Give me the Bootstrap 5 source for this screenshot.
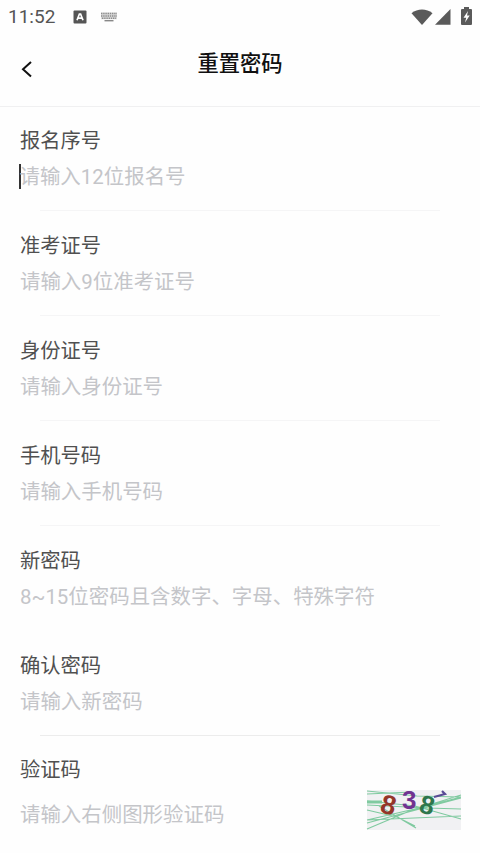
<!DOCTYPE html>
<html lang="zh-CN">
<head>
<meta charset="utf-8">
<meta name="viewport" content="width=device-width, initial-scale=1">
<title>重置密码</title>
<link href="https://cdn.jsdelivr.net/npm/bootstrap@5.3.0/dist/css/bootstrap.min.css" rel="stylesheet">
<style>
body{font-family:Roboto,"Noto Sans CJK SC",sans-serif;background:#fefefe;height:853px;overflow:hidden}
.status-bar{height:34px;padding:0 7px 0 8px;color:#555}
.clock{font-size:19px;line-height:34px;width:65px}
.title-bar{height:72.5px;border-bottom:1.5px solid #f0f0f1}
.side{width:54px}
.page-title{font-size:21.3px;line-height:32px;font-weight:500;color:#101010;margin-top:14px}
.field{height:104.85px;padding:19.8px 20px 0}
.field-label{font-size:20.3px;line-height:30px;color:#505050}
.hint{font-size:20.45px;line-height:30px;color:#c4c5c9;margin-top:6px}
.caret{width:1.5px;height:25px;background:#333;margin:-1px -1px 0 -1px}
.rule{height:1px;background:#f5f5f6;margin:18px 20px 0}
.rule-dark{background:#ececec}
.captcha-row{padding:6px 19px 0 0}
.captcha{margin-top:-1px}
</style>
<script src="https://cdn.jsdelivr.net/npm/bootstrap@5.3.0/dist/js/bootstrap.bundle.min.js"></script>
</head>
<body>
<div class="status-bar d-flex align-items-center">
  <span class="clock">11:52</span>
  <svg width="14" height="14" viewBox="0 0 14 14"><rect x=".5" y=".5" width="13" height="13" rx="1" fill="#555"/><path d="M4 10.3 6.4 4h1.2L10 10.3M5 8.2h4" fill="none" stroke="#fff" stroke-width="1.7"/></svg>
  <svg width="16" height="10" viewBox="0 0 16 10" style="margin-left:14px"><path d="M0 1.5h16M0 4h16M1 6.3h14" stroke="#888" stroke-width="1.5" stroke-dasharray="1.4 .8"/><path d="M0 .5h16v6.7H0z" fill="#999" opacity=".35"/><path d="M3.5 8.7h9" stroke="#888" stroke-width="1.4"/></svg>
  <svg class="ms-auto" width="22" height="17" viewBox="0 0 22 17"><path d="M.5 4.200C6.500-.7 15.500-.7 21.500 4.200L11 16z" fill="#5a5a5a"/></svg>
  <svg width="16" height="16" viewBox="0 0 16 16" style="margin-left:2px"><path d="M15.500 0v15.800H0z" fill="#5a5a5a"/></svg>
  <svg width="11" height="18" viewBox="0 0 11 18" style="margin:-2px 1px 0 10px"><path d="M3 0h5v2h2q1 0 1 1v14q0 1-1 1H1q-1 0-1-1V3q0-1 1-1h2z" fill="#5a5a5a"/><path d="M7 4 2.500 10.700h2.700L4 15.500 8.700 8.500H6z" fill="#fff"/></svg>
</div>
<header class="title-bar d-flex">
  <a href="#" class="side d-flex pt-4 ps-3" aria-label="返回"><svg width="20" height="22" viewBox="0 0 20 22"><path d="M15 4 7 11.300 15 18.600" fill="none" stroke="#111" stroke-width="2"/></svg></a>
  <h1 class="page-title flex-fill text-center mb-0">重置密码</h1>
  <div class="side"></div>
</header>
<main>
  <div class="field"><div class="field-label">报名序号</div><div class="hint d-flex align-items-center"><span class="caret"></span><span>请输入12位报名号</span></div><div class="rule"></div></div>
  <div class="field"><div class="field-label">准考证号</div><div class="hint">请输入9位准考证号</div><div class="rule"></div></div>
  <div class="field"><div class="field-label">身份证号</div><div class="hint">请输入身份证号</div><div class="rule"></div></div>
  <div class="field"><div class="field-label">手机号码</div><div class="hint">请输入手机号码</div><div class="rule"></div></div>
  <div class="field"><div class="field-label">新密码</div><div class="hint">8~15位密码且含数字、字母、特殊字符</div></div>
  <div class="field"><div class="field-label">确认密码</div><div class="hint">请输入新密码</div><div class="rule rule-dark"></div></div>
  <div class="field pe-0"><div class="field-label">验证码</div>
    <div class="captcha-row d-flex align-items-center justify-content-between">
      <span class="hint mt-2">请输入右侧图形验证码</span>
      <svg class="captcha" width="94" height="40" viewBox="0 0 94 40" overflow="visible">
        <rect width="94" height="40" fill="#f1f1f3"/>
        <g fill="none" stroke="#80caa0" stroke-width="1.200">
          <path d="M0 1 50 6 94 7M0 4 45 2M0 11 48 16 94 29M0 15 60 18 94 19M0 30 52 18 94 5M0 33 94 8M0 39 45 20 94 7M0 20 30 27 48 36M12 16 49 38M0 30 94 26"/>
          <path d="M0 12h15" stroke-width="3"/>
        </g>
        <g font-family="Liberation Sans, Arial, sans-serif" font-weight="700">
          <text transform="translate(12 22) rotate(14)" fill="#943629" font-size="27">8</text>
          <text x="35" y="19" fill="#713391" font-size="26">3</text>
          <text transform="translate(51 22) rotate(14)" fill="#2e764c" font-size="26">8</text>
        </g>
        <path d="m67 7 11-3-3-3" fill="none" stroke="#594a95" stroke-width="2.200"/>
      </svg>
    </div>
  </div>
</main>
</body>
</html>
